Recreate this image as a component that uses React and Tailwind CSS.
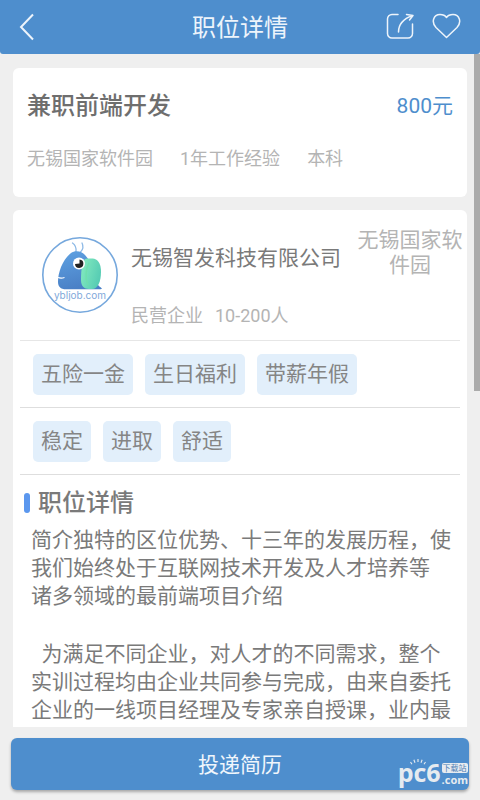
import React from 'react';

const jobInfo = ['无锡国家软件园', '1年工作经验', '本科'];

const benefits = ['五险一金', '生日福利', '带薪年假'];

const traits = ['稳定', '进取', '舒适'];

const description = [
  ['简介独特的区位优势、十三年的发展历程，使', '我们始终处于互联网技术开发及人才培养等', '诸多领域的最前端项目介绍'],
  ['  为满足不同企业，对人才的不同需求，整个', '实训过程均由企业共同参与完成，由来自委托', '企业的一线项目经理及专家亲自授课，业内最'],
];

const CompanyLogo = () => (
  <svg className="w-[78px] h-[78px] shrink-0" viewBox="0 0 78 78" role="img" aria-label="ybljob.com">
    <defs>
      <linearGradient id="body" x1="0" y1="0" x2="0.3" y2="1">
        <stop offset="0" stopColor="#5fa2e2" />
        <stop offset="1" stopColor="#4a80c6" />
      </linearGradient>
      <linearGradient id="shell" x1="0" y1="0" x2="1" y2="0.4">
        <stop offset="0" stopColor="#86ecc0" />
        <stop offset="1" stopColor="#58cdb4" />
      </linearGradient>
    </defs>
    <circle cx="39" cy="39" r="37.2" fill="#fff" stroke="#76a8dd" strokeWidth="1.6" />
    {/* Antennae */}
    <path d="M35 16c.5-4-.5-7-3.500-9M39.500 16c2.500-2.500 3-6 1.500-9" fill="none" stroke="#8db9e6" strokeWidth="1.300" strokeLinecap="round" />
    <path d="M17 46c0-10 5-23 13-29 4-3 11-2 14 2 4 4 6 9 8 15l4 13c1 3 3 3.500 5 5.500-1 .8-2 .8-3.500.8H25c-5.500 0-8-2.800-8-7.300z" fill="url(#body)" />
    <path d="M46 22.500h5.500c5 0 8.500 5 8.500 13 0 10-3 17.500-9 17.500h-3c-5 0-8-3-8-9 0-9 1-21.500 6-21.500z" fill="url(#shell)" />
    <path d="M48 27c-3.500 6-4 16-1 22" fill="none" stroke="#6fdfae" strokeWidth="1.500" />
    <circle cx="38" cy="27.500" r="6" fill="#fff" />
    <path d="M38.500 27.500V23.500a4.200 4.200 0 1 1-4.500 4.500z" fill="#222" />
    <path d="M17 41.500c2 .7 4.500.6 6.500 0" fill="none" stroke="#fff" strokeWidth="1.200" />
    <text x="39" y="63" textAnchor="middle" fontSize="10" fill="#7fa9da" fontFamily="Inter, sans-serif">ybljob.com</text>
  </svg>
);

const TagRow = ({ tags }) => (
  <ul className="mx-[7px] flex flex-wrap gap-3 border-b border-[#dedede] px-[13px] pt-[13px] pb-3">
    {tags.map((tag) => (
      <li key={tag} className="rounded-[5px] bg-[#e2effb] px-2 text-[21px] leading-[41px] text-[#858585]">{tag}</li>
    ))}
  </ul>
);

const App = () => {
  return (
    <div className="relative flex h-screen flex-col bg-[#efefef] font-[Roboto,'Noto_Sans_CJK_SC',sans-serif] text-[#7a7a7a]">
      {/* Top bar */}
      <header className="grid h-[54px] shrink-0 grid-cols-[1fr_auto_1fr] items-center rounded-b-[3px] bg-[#4e8ecd] px-[19px] text-[#edf4fb]">
        <button type="button" aria-label="返回" className="justify-self-start">
          <svg width="16" height="28" viewBox="0 0 16 28" fill="none" stroke="currentColor" strokeWidth="2">
            <path d="M14 1.500L2 14l12 12.500" />
          </svg>
        </button>
        <h1 className="pt-px text-[24px] leading-8">职位详情</h1>
        <div className="flex items-center gap-[18px] justify-self-end">
          <button type="button" aria-label="分享">
            <svg width="28" height="28" viewBox="0 0 28 28" fill="none" stroke="currentColor" strokeWidth="1.500" strokeLinecap="round" strokeLinejoin="round">
              <path d="M12 1.500H6A4.500 4.500 0 0 0 1.500 6v14.500A4.500 4.500 0 0 0 6 25h16a4.500 4.500 0 0 0 4.500-4.500V11" />
              <path d="M12.500 19C12.500 11 17 6 26.500 2.500M20.500 1.500l6.500 1-3.500 4.500" />
            </svg>
          </button>
          <button type="button" aria-label="收藏">
            <svg width="29" height="28" viewBox="0 0 29 28" fill="none" stroke="currentColor" strokeWidth="1.500" strokeLinejoin="round">
              <path d="M14.500 24.500L4 14.500C-1 9 1.500 1.500 8 1.500c3 0 5.500 1.500 6.500 3 1-1.500 3.500-3 6.500-3 6.500 0 9 7.500 4 13z" />
            </svg>
          </button>
        </div>
      </header>

      <main className="relative flex min-h-0 flex-1 flex-col gap-[13px] overflow-hidden px-[13px] pt-[14px]">
        {/* Job summary */}
        <section className="shrink-0 rounded-[6px] bg-white px-[14px] pt-[22px] pb-6">
          <div className="flex items-center justify-between">
            <h2 className="text-[24px] leading-8 font-medium text-[#6e6e6e]">兼职前端开发</h2>
            <span className="text-[21px] leading-8 text-[#4e8ecd]">800元</span>
          </div>
          <div className="mt-[23px] flex gap-[27px] text-[18px] leading-7 text-[#b4b4b4]">
            {jobInfo.map((info) => (
              <span key={info}>{info}</span>
            ))}
          </div>
        </section>

        {/* Company and description */}
        <section className="flex-1 rounded-t-[6px] bg-white">
          <div className="mx-[7px] flex border-b border-[#e6e6e6] pt-[17px] pb-[10px]">
            <div className="ml-[21px] pt-[9px]">
              <CompanyLogo />
            </div>
            <div className="ml-3 shrink-0 pt-4">
              <h3 className="text-[21px] leading-[30px]">无锡智发科技有限公司</h3>
              <p className="mt-[29px] flex gap-3 text-[18px] leading-7 text-[#b4b4b4]">
                <span>民营企业</span>
                <span>10-200人</span>
              </p>
            </div>
            <p className="-mr-1 ml-auto w-[108px] pt-px text-center text-[21px] leading-[25px] text-[#b4b4b4]">无锡国家软件园</p>
          </div>

          <TagRow tags={benefits} />
          <TagRow tags={traits} />

          <div className="px-[11px] pt-3">
            <h2 className="flex items-center gap-2 text-[24px] leading-8 font-medium">
              <span className="h-5 w-[6px] rounded-[3px] bg-[#5b97ee]" />
              职位详情
            </h2>
            <div className="mt-[7px] ml-[7px] flex flex-col gap-[30px] text-[21px] leading-7 whitespace-pre">
              {description.map((lines, i) => (
                <p key={i}>{lines.join('\n')}</p>
              ))}
            </div>
          </div>
        </section>

        {/* Scroll indicator */}
        <div className="absolute top-0 right-0 h-1/2 w-[6px] bg-[#ababab]" />
      </main>

      <footer className="shrink-0 px-[11px] pt-[11px] pb-[10px]">
        <button type="button" className="h-[52px] w-full rounded-[6px] bg-[#4e8ecd] pt-1 text-[21px] text-[#f0f6fc] shadow-[0_2px_3px_rgba(0,0,0,0.3)]">投递简历</button>
      </footer>

      {/* Site mark */}
      <div className="pointer-events-none absolute right-3 bottom-[14px] flex items-end gap-px font-['Open_Sans',sans-serif] font-bold text-[#e6ebf0]">
        <svg className="absolute top-0 left-[11px]" width="18" height="6" viewBox="0 0 20 8" fill="none" stroke="#e6ebf0" strokeWidth="1.500">
          <path d="M2 7L0 4M6 5L4.500 1M10 4V0M14 5l1.500-4M18 7l2-3" />
        </svg>
        <span className="text-[25px] leading-[27px]">pc6</span>
        <span className="flex flex-col">
          <span className="rounded-[2px] bg-[#e6ebf0] px-px font-['Noto_Sans_CJK_SC',sans-serif] text-[8px] leading-[10px] font-normal text-[#4e7fb4]">下载站</span>
          <span className="text-[11px] leading-[13px]">.com</span>
        </span>
      </div>
    </div>
  );
};

export default App;
